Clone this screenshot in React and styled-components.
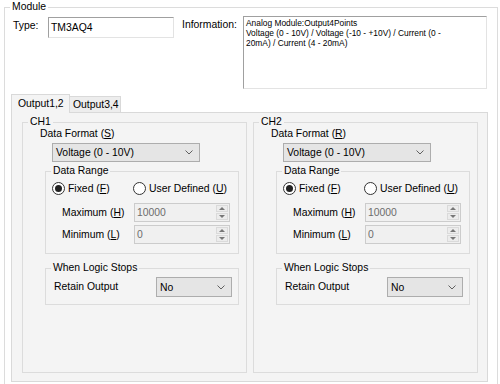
import React from "react";
import styled, { createGlobalStyle } from "styled-components";

const GlobalStyle = createGlobalStyle`
  html, body {
    margin: 0;
    padding: 0;
    background: #fff;
  }
  body {
    font-family: "Liberation Sans", Arial, sans-serif;
    font-size: 10.4px;
    color: #000;
  }
  * {
    box-sizing: border-box;
  }
`;

const Window = styled.div`
  width: 500px;
  height: 384px;
  padding-top: 1px;
  overflow: hidden;
  background: #fff;
`;

const Group = styled.fieldset`
  min-width: 0;
  margin: 0;
  padding: 0;
  border: 1px solid #dcdcdc;
`;

const ModuleGroup = styled(Group)`
  width: 494px;
  height: 400px;
  margin-left: 4px;
`;

const SubGroup = styled(Group)`
  width: 194px;
  margin-left: 22px;
  margin-top: ${(p) => p.$top}px;
  padding-bottom: ${(p) => p.$bottom}px;
`;

const Legend = styled.legend`
  height: 12px;
  margin-left: 5px;
  padding: 0 2px;
  line-height: 12px;
`;

const TopRow = styled.div`
  display: flex;
  align-items: flex-start;
  margin-top: 3px;
  padding-left: 8px;
`;

const Label = styled.span`
  display: block;
  flex: none;
  width: ${(p) => (p.$w ? `${p.$w}px` : "auto")};
  margin-top: ${(p) => p.$top || 0}px;
  margin-left: ${(p) => p.$left || 0}px;
  line-height: 12px;
  white-space: nowrap;
`;

const TextBox = styled.div`
  flex: none;
  width: 126px;
  height: 21px;
  margin-top: 1px;
  padding: 3px 2px 0;
  border: 1px solid;
  border-color: #a0a0a0 #e3e3e3 #e3e3e3 #a0a0a0;
  background: #fff;
  line-height: 14px;
`;

const InfoBox = styled.div`
  flex: none;
  width: 244px;
  height: 73px;
  padding: 1px 2px;
  border: 1px solid;
  border-color: #a0a0a0 #e3e3e3 #e3e3e3 #a0a0a0;
  background: #fff;
  font-size: 8.4px;
  line-height: 10px;
`;

const Tabs = styled.div`
  width: 477px;
  margin: 5px 0 0 6px;
`;

const TabStrip = styled.div`
  display: flex;
  align-items: flex-end;
  height: 18px;
`;

const Tab = styled.div`
  position: relative;
  z-index: ${(p) => (p.$active ? 1 : 0)};
  width: ${(p) => (p.$active ? 59 : 52)}px;
  height: ${(p) => (p.$active ? 19 : 16)}px;
  margin-left: ${(p) => (p.$active ? 0 : -1)}px;
  margin-bottom: ${(p) => (p.$active ? -1 : 0)}px;
  padding-left: ${(p) => (p.$active ? 6 : 3)}px;
  border: 1px solid #d9d9d9;
  border-bottom: none;
  background: ${(p) => (p.$active ? "#f4f4f4" : "#ededed")};
  line-height: ${(p) => (p.$active ? 17 : 15)}px;
  white-space: nowrap;
`;

const TabPage = styled.div`
  display: grid;
  grid-template-columns: 225px 225px;
  column-gap: 6px;
  height: 270px;
  padding: 3px 9px 8px 10px;
  border: 1px solid #d9d9d9;
  background: #f4f4f4;
`;

const Combo = styled.div`
  display: flex;
  align-items: center;
  justify-content: space-between;
  flex: none;
  width: ${(p) => p.$w}px;
  height: ${(p) => p.$h}px;
  margin-top: ${(p) => p.$top || 0}px;
  margin-left: ${(p) => p.$left || 0}px;
  padding: 0 6px 0 3px;
  border: 1px solid #adadad;
  background: #e5e5e5;
  white-space: nowrap;
`;

const RadioRow = styled.div`
  display: flex;
  height: 14px;
  margin-top: 4px;
  padding-left: 6px;
`;

const RadioItem = styled.label`
  display: flex;
  align-items: center;
  gap: 3px;
  width: 81px;
  white-space: nowrap;
`;

const RadioCircle = styled.span`
  position: relative;
  flex: none;
  width: 13px;
  height: 13px;
  border: 1px solid #333;
  border-radius: 50%;
  background: #fff;

  &::after {
    content: "";
    display: ${(p) => (p.$checked ? "block" : "none")};
    position: absolute;
    top: 2px;
    left: 2px;
    width: 7px;
    height: 7px;
    border-radius: 50%;
    background: #222;
  }
`;

const RangeGrid = styled.div`
  display: grid;
  grid-template-columns: 72px 96px;
  grid-auto-rows: 19px;
  row-gap: 3px;
  align-items: center;
  margin-top: 8px;
  padding-left: 16px;
`;

const NumBox = styled.div`
  display: flex;
  align-items: stretch;
  height: 19px;
  padding: 1px 1px 1px 2px;
  border: 1px solid #cccccc;
  background: #f0f0f0;
  color: #6d6d6d;
  line-height: 15px;
`;

const NumValue = styled.span`
  flex: 1;
`;

const Spinner = styled.div`
  display: flex;
  flex-direction: column;
  gap: 1px;
  width: 12px;
`;

const SpinButton = styled.div`
  display: flex;
  flex: 1;
  align-items: center;
  justify-content: center;
  border: 1px solid #dadada;
  background: #ececec;

  &::before {
    content: "";
    border-left: 3px solid transparent;
    border-right: 3px solid transparent;
    ${(p) =>
      p.$up ? "border-bottom: 3px solid #777;" : "border-top: 3px solid #777;"}
  }
`;

const LogicRow = styled.div`
  display: flex;
  align-items: center;
  margin-top: 3px;
  padding-left: 8px;
`;

const Chevron = () => (
  <svg width="8" height="5" viewBox="0 0 8 5">
    <polyline
      points="0.5,0.5 4,4 7.5,0.5"
      fill="none"
      stroke="#606060"
      strokeWidth="1"
    />
  </svg>
);

const NumericField = ({ value }) => (
  <NumBox>
    <NumValue>{value}</NumValue>
    <Spinner>
      <SpinButton $up />
      <SpinButton />
    </Spinner>
  </NumBox>
);

const Channel = ({ name, formatKey }) => (
  <Group>
    <Legend>{name}</Legend>
    <Label $left={17}>
      Data Format (<u>{formatKey}</u>)
    </Label>
    <Combo $w={148} $h={19} $top={3} $left={29}>
      <span>Voltage (0 - 10V)</span>
      <Chevron />
    </Combo>
    <SubGroup $top={3} $bottom={9}>
      <Legend>Data Range</Legend>
      <RadioRow>
        <RadioItem>
          <RadioCircle $checked />
          <span>
            Fixed (<u>F</u>)
          </span>
        </RadioItem>
        <RadioItem>
          <RadioCircle />
          <span>
            User Defined (<u>U</u>)
          </span>
        </RadioItem>
      </RadioRow>
      <RangeGrid>
        <Label>
          Maximum (<u>H</u>)
        </Label>
        <NumericField value="10000" />
        <Label>
          Minimum (<u>L</u>)
        </Label>
        <NumericField value="0" />
      </RangeGrid>
    </SubGroup>
    <SubGroup $top={8} $bottom={7}>
      <Legend>When Logic Stops</Legend>
      <LogicRow>
        <Label $w={102}>Retain Output</Label>
        <Combo $w={76} $h={20}>
          <span>No</span>
          <Chevron />
        </Combo>
      </LogicRow>
    </SubGroup>
  </Group>
);

export default function App() {
  return (
    <>
      <GlobalStyle />
      <Window>
        <ModuleGroup>
          <Legend>Module</Legend>
          <TopRow>
            <Label $w={35} $top={4}>
              Type:
            </Label>
            <TextBox>TM3AQ4</TextBox>
            <Label $w={61} $top={3} $left={8}>
              Information:
            </Label>
            <InfoBox>
              Analog Module:Output4Points
              <br />
              Voltage (0 - 10V) / Voltage (-10 - +10V) / Current (0 -
              <br />
              20mA) / Current (4 - 20mA)
            </InfoBox>
          </TopRow>
          <Tabs>
            <TabStrip>
              <Tab $active>Output1,2</Tab>
              <Tab>Output3,4</Tab>
            </TabStrip>
            <TabPage>
              <Channel name="CH1" formatKey="S" />
              <Channel name="CH2" formatKey="R" />
            </TabPage>
          </Tabs>
        </ModuleGroup>
      </Window>
    </>
  );
}
